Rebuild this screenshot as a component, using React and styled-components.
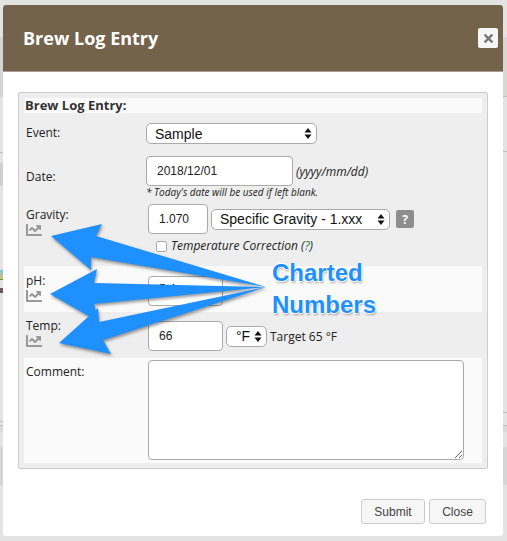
import React from 'react';
import styled, { createGlobalStyle } from 'styled-components';
import { FaTimes, FaChartLine } from 'react-icons/fa';

const Global = createGlobalStyle`
  html, body { margin: 0; padding: 0; background: #e3e3e3; }
  body { width: 507px; height: 541px; overflow: hidden; font-family: "Open Sans", sans-serif; color: #222; }
`;
const Page = styled.div`position: relative; width: 507px; height: 541px; overflow: hidden;`;
const Backdrop = styled.div`display: grid; grid-template-columns: 1fr 1fr;`;
const Column = styled.div`display: flex; flex-direction: column;`;
const Band = styled.div`
  height: ${p => p.$h}px;
  background: ${p => p.$bg || '#e3e3e3'};
  box-sizing: border-box;
  border-bottom: ${p => (p.$line ? '1px solid #bdbdbd' : '0')};
`;
const LinkStub = styled.div`
  width: 3px; height: 10px; box-sizing: border-box; flex: none;
  background: linear-gradient(#7fc4d8, #d8c070); border-bottom: 1px solid #5aa04a;
`;
const TextStub = styled.div`width: 3px; height: 5px; flex: none; margin-top: 8px; background: #6a5a60;`;
const Modal = styled.div`
  position: absolute; left: 3px; top: 5px; width: 500px; height: 531px;
  background: #fff; display: flex; flex-direction: column; border-radius: 3px;
`;
const Header = styled.header`
  height: 67px; flex: none; box-sizing: border-box; background: #74634b;
  border-radius: 3px 3px 0 0; border-bottom: 1px solid #a89f92;
  padding: 0 5px 0 20px; display: flex; align-items: center; justify-content: space-between;
`;
const Title = styled.h1`margin: 0; font: 700 18px "Open Sans", sans-serif; color: #fff;`;
const CloseX = styled.button`
  width: 20px; height: 20px; padding: 0; border: 0; border-radius: 2px; background: #f6f6f6;
  color: #777; display: flex; align-items: center; justify-content: center; font-size: 13px;
`;
const Panel = styled.form`
  margin: 20px 15px 0; height: 377px; box-sizing: border-box; flex: none;
  border: 1px solid #ccc; border-radius: 2px; background: #eee; padding: 5px 5px 5px;
  display: flex; flex-direction: column;
`;
const Legend = styled.div`
  height: 15px; flex: none; background: #fafafa; padding-left: 1px;
  font: 700 13px/15px "Open Sans", sans-serif; color: #333;
`;
const Row = styled.div`
  height: ${p => p.$h}px; flex: none; display: grid; grid-template-columns: 122px 1fr;
  background: ${p => (p.$light ? '#fafafa' : 'transparent')};
`;
const LabelCol = styled.div`
  padding: ${p => p.$top}px 0 0 2px; display: flex; flex-direction: column; align-items: flex-start;
`;
const Label = styled.label`font: 400 12px/16px "Open Sans", sans-serif; color: #222;`;
const Chart = styled(FaChartLine)`color: #999; font-size: 16px; margin-top: -1px; display: block;`;
const FieldCol = styled.div`
  padding: ${p => p.$top}px 0 0 ${p => p.$left || 0}px; display: flex; flex-direction: column; align-items: flex-start;
`;
const Line = styled.div`display: flex; align-items: center; gap: ${p => p.$gap || 3}px;`;
const TextInput = styled.input`
  box-sizing: border-box; width: ${p => p.$w}px; height: 30px; border: 1px solid #aaa; border-radius: 4px;
  background: #fff; padding: 0 10px ${p => p.$lift || 0}px; font: 400 12px "Liberation Sans", Arial, sans-serif; color: #222; outline: 0;
`;
const SelectWrap = styled.div`position: relative; width: ${p => p.$w}px; height: 21px; flex: none;`;
const Select = styled.select`
  display: block; appearance: none; box-sizing: border-box; width: 100%; height: 100%; border: 1px solid #aaa; border-radius: 5px;
  background: #fff; padding: 0 0 0 ${p => p.$pad || 8}px; font: 400 14px "Liberation Sans", Arial, sans-serif; color: #111; outline: 0;
`;
const Caret = styled.svg`position: absolute; right: 5px; top: 5px; pointer-events: none;`;
const Note = styled.span`font: italic 400 12px "Open Sans", sans-serif; color: #222;`;
const Hint = styled.span`font: italic 400 10px/12px "Open Sans", sans-serif; color: #222; margin: 0;`;
const Help = styled.button`
  width: 18px; height: 18px; padding: 0; border: 0; border-radius: 2px; background: #8e8e8e; color: #fff;
  font: 700 12px "Open Sans", sans-serif; margin-left: 3px;
`;
const CheckLine = styled.label`
  display: flex; align-items: center; gap: 4px; margin: 5px 0 0 8px;
  font: italic 400 12px/14px "Open Sans", sans-serif; color: #222;
`;
const Box = styled.input`
  appearance: none; margin: 0; width: 11px; height: 11px; box-sizing: border-box; background: #fff;
  border: 1px solid #aaa; border-radius: 2px;
`;
const HelpLink = styled.span`color: #2d7a3a;`;
const Plain = styled.span`font: 400 12px "Open Sans", sans-serif; color: #222;`;
const TextArea = styled.textarea`
  box-sizing: border-box; width: 316px; height: 100px; border: 1px solid #aaa; border-radius: 4px;
  background: #fff; outline: 0; display: block;
`;
const Footer = styled.div`margin: 30px 17px 0 0; display: flex; justify-content: flex-end; gap: 4px;`;
const Btn = styled.button`
  box-sizing: border-box; height: 25px; width: ${p => p.$w}px; padding: 0; background: #f6f6f6;
  border: 1px solid #ccc; border-radius: 3px; font: 400 12px "Liberation Sans", Arial, sans-serif; color: #444;
`;
const ArrowLayer = styled.svg`
  position: absolute; left: 0; top: 0; width: 507px; height: 541px; pointer-events: none; overflow: visible;
  filter: drop-shadow(1px 2px 1.5px rgba(0,0,0,.4));
`;
const Callout = styled.div`
  position: absolute; left: 272px; top: 257px; font: 700 24px/32px "Liberation Sans", Arial, sans-serif; color: #1e90ff;
  text-shadow: 0 0 2px #fff, 1px 0 1px #fff, -1px 0 1px #fff, 0 1px 1px #fff, 0 -1px 1px #fff, 1px 2px 2px rgba(0,0,0,.35);
`;

const UpDown = () => (
  <Caret width="8" height="11" viewBox="0 0 8 11" aria-hidden="true">
    <path d="M4 0L7.5 4.5H.5zM4 11L.5 6.5h7z" fill="#111" />
  </Caret>
);
const Pick = ({ w, pad, value }) => (
  <SelectWrap $w={w}>
    <Select $pad={pad} defaultValue={value}><option>{value}</option></Select>
    <UpDown />
  </SelectWrap>
);

export default function App() {
  return (
    <Page>
      <Global />
      <Backdrop>
        <Column>
          <Band $h={37} />
          <Band $h={60} $bg="#d4d4d4" />
          <Band $h={56} $line />
          <Band $h={10} />
          <Band $h={23} $bg="#cfcfcf" />
          <Band $h={84} />
          <LinkStub />
          <TextStub />
          <Band $h={72} />
          <Band $h={57} $line />
          <Band $h={4} $line />
          <Band $h={6} $bg="#d9d9d9" />
          <Band $h={15} />
          <Band $h={38} $bg="#d6d6d6" />
        </Column>
        <Column>
          <Band $h={37} />
          <Band $h={60} $bg="#dad6d2" $line />
          <Band $h={55} $line />
          <Band $h={261} $line />
          <Band $h={13} $line />
          <Band $h={6} $bg="#d9d9d9" />
          <Band $h={15} />
          <Band $h={38} $bg="#d6d6d6" />
        </Column>
      </Backdrop>
      <Modal>
        <Header>
          <Title>Brew Log Entry</Title>
          <CloseX type="button"><FaTimes /></CloseX>
        </Header>
        <Panel>
          <Legend>Brew Log Entry:</Legend>
          <Row $h={39}>
            <LabelCol $top={12}><Label>Event:</Label></LabelCol>
            <FieldCol $top={10}><Pick w={171} pad={8} value="Sample" /></FieldCol>
          </Row>
          <Row $h={50}>
            <LabelCol $top={17}><Label>Date:</Label></LabelCol>
            <FieldCol $top={4}>
              <Line>
                <TextInput $w={147} defaultValue="2018/12/01" />
                <Note>(yyyy/mm/dd)</Note>
              </Line>
              <Hint>* Today's date will be used if left blank.</Hint>
            </FieldCol>
          </Row>
          <Row $h={64}>
            <LabelCol $top={5}><Label>Gravity:</Label><Chart /></LabelCol>
            <FieldCol $top={2} $left={2}>
              <Line>
                <TextInput $w={60} defaultValue="1.070" />
                <Pick w={179} pad={8} value="Specific Gravity - 1.xxx" />
                <Help type="button">?</Help>
              </Line>
              <CheckLine><Box type="checkbox" /><span>Temperature Correction (<HelpLink>?</HelpLink>)</span></CheckLine>
            </FieldCol>
          </Row>
          <Row $h={46} $light>
            <LabelCol $top={7}><Label>pH:</Label><Chart /></LabelCol>
            <FieldCol $top={10} $left={2}><TextInput $w={75} $lift={4} defaultValue="5.4" /></FieldCol>
          </Row>
          <Row $h={46}>
            <LabelCol $top={6}><Label>Temp:</Label><Chart /></LabelCol>
            <FieldCol $top={9} $left={2}>
              <Line>
                <TextInput $w={75} defaultValue="66" />
                <Pick w={41} pad={9} value="°F" />
                <Plain>Target 65 °F</Plain>
              </Line>
            </FieldCol>
          </Row>
          <Row $h={105} $light>
            <LabelCol $top={6}><Label>Comment:</Label></LabelCol>
            <FieldCol $top={2} $left={2}><TextArea /></FieldCol>
          </Row>
        </Panel>
        <Footer>
          <Btn type="button" $w={64}>Submit</Btn>
          <Btn type="button" $w={57}>Close</Btn>
        </Footer>
      </Modal>
      <ArrowLayer viewBox="0 0 507 541" aria-hidden="true">
        <path fill="#1e90ff" d="M51 236L102 224L96 236L266 287L91 257L91 270Z" />
        <path fill="#1e90ff" d="M50 294L97 269L94 283L266 287L94 304L99 322Z" />
        <path fill="#1e90ff" d="M59 343L98 308L99 322L266 287L103 340L111 354Z" />
      </ArrowLayer>
      <Callout>Charted<br />Numbers</Callout>
    </Page>
  );
}
